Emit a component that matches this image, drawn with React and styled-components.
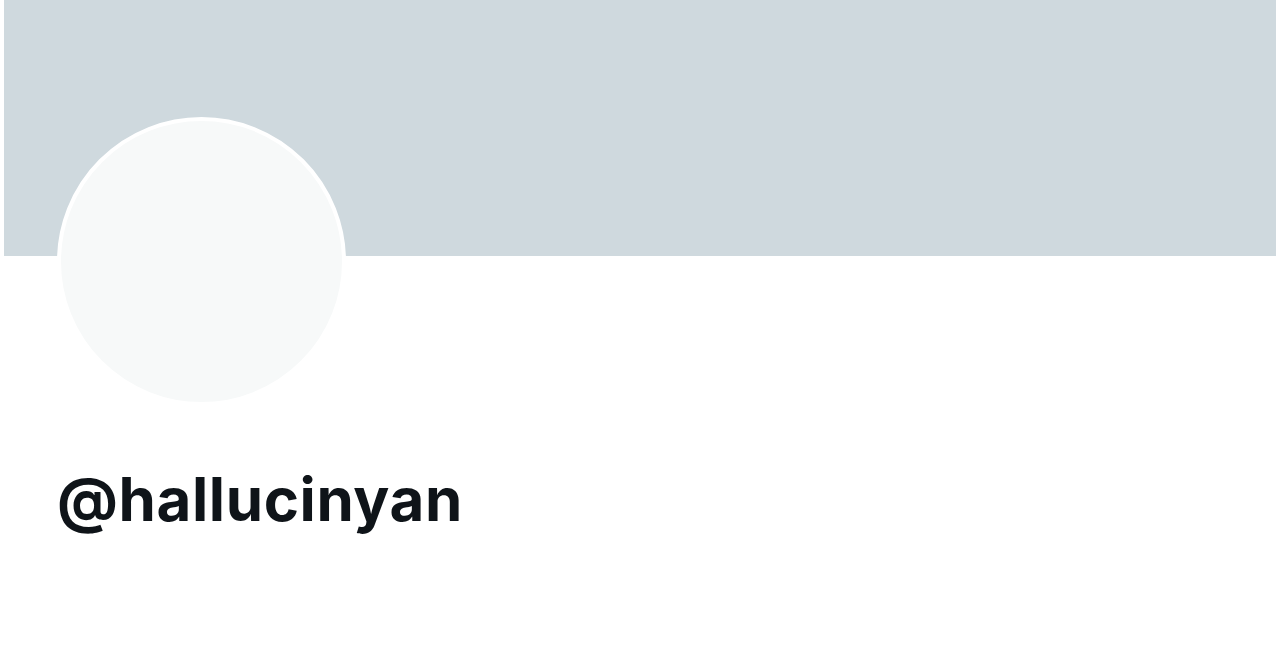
import React from 'react';
import styled, { createGlobalStyle } from 'styled-components';

const GlobalStyle = createGlobalStyle`
  body {
    margin: 0;
    background: #ffffff;
    font-family: Inter, "Noto Sans", sans-serif;
  }
`;

const Page = styled.div`
  width: 1280px;
  height: 670px;
  padding: 0 4px;
  box-sizing: border-box;
  overflow: hidden;
`;

const Banner = styled.div`
  height: 256px;
  background-color: #cfd9de;
`;

const Body = styled.div`
  padding-left: 53px;
`;

const Avatar = styled.div`
  width: 281px;
  height: 281px;
  margin-top: -139px;
  border-radius: 50%;
  border: 4px solid #ffffff;
  background-color: #f7f9f9;
  position: relative;
`;

const Handle = styled.h1`
  margin: 53px 0 0 0;
  font-size: 60px;
  font-weight: 700;
  line-height: 80px;
  letter-spacing: 0.6px;
  color: #0f1419;
`;

export default function App() {
  return (
    <Page>
      <GlobalStyle />
      <Banner />
      <Body>
        <Avatar />
        <Handle>@hallucinyan</Handle>
      </Body>
    </Page>
  );
}
